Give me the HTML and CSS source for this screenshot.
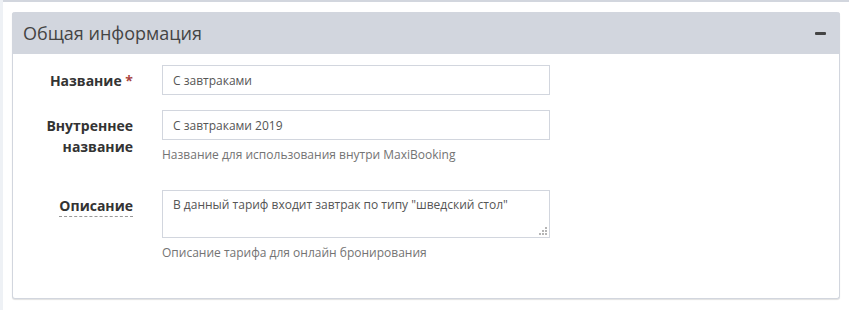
FILE: index.html
```html
<!DOCTYPE html>
<html lang="ru">
<head>
<meta charset="utf-8">
<link rel="stylesheet" href="styles.css">
</head>
<body>
<div class="layout">
  <div class="side-strip"></div>
  <main class="content">
    <section class="box">
      <header class="box-header">
        <h3 class="box-title">Общая информация</h3>
        <button class="box-tool" type="button" aria-label="Свернуть"><span class="minus"></span></button>
      </header>
      <div class="box-body">
        <div class="form-group">
          <label class="control-label" for="f-name">Название <span class="req">*</span></label>
          <div class="field">
            <input id="f-name" class="form-control" type="text" value="С завтраками">
          </div>
        </div>
        <div class="form-group">
          <label class="control-label" for="f-inner">Внутреннее название</label>
          <div class="field">
            <input id="f-inner" class="form-control" type="text" value="С завтраками 2019">
            <p class="help-block">Название для использования внутри MaxiBooking</p>
          </div>
        </div>
        <div class="form-group">
          <label class="control-label" for="f-desc"><span class="dashed">Описание</span></label>
          <div class="field">
            <div class="textarea-wrap">
              <textarea id="f-desc" class="form-control textarea">В данный тариф входит завтрак по типу "шведский стол"</textarea>
              <svg class="grip" width="8" height="8" viewBox="0 0 8 8" aria-hidden="true">
                <rect x="6" y="0" width="2" height="2"/>
                <rect x="3" y="3" width="2" height="2"/><rect x="6" y="3" width="2" height="2"/>
                <rect x="0" y="6" width="2" height="2"/><rect x="3" y="6" width="2" height="2"/><rect x="6" y="6" width="2" height="2"/>
              </svg>
            </div>
            <p class="help-block">Описание тарифа для онлайн бронирования</p>
          </div>
        </div>
      </div>
    </section>
  </main>
</div>
</body>
</html>
```

FILE: styles.css
```css
* { box-sizing: border-box; }
html, body { margin: 0; padding: 0; background: #fff; }
body {
  font-family: "Open Sans", "Liberation Sans", sans-serif;
  color: #333;
  width: 849px;
  height: 310px;
  overflow: hidden;
}
.layout { display: flex; height: 310px; }
.side-strip { width: 3px; background: #eef1f5; flex: none; }
.content {
  flex: 1;
  border-top: 2px solid #d2d6de;
  padding: 10px 9px 0 9px;
}
.box {
  border: 1px solid #d2d6de;
  border-top: 0;
  border-radius: 3px;
  background: #fff;
  box-shadow: 0 1px 1px rgba(0,0,0,0.12);
}
.box-header {
  background: #d2d6de;
  height: 42px;
  border-radius: 3px 3px 0 0;
  margin: 0 -1px;
  display: flex;
  align-items: center;
  justify-content: space-between;
  padding: 0 14px 0 11px;
}
.box-title {
  margin: 0;
  font-size: 18px;
  font-weight: 400;
  color: #444;
  line-height: 1;
}
.box-tool {
  border: 0;
  background: transparent;
  padding: 0;
  width: 12px;
  height: 12px;
  display: flex;
  align-items: center;
  justify-content: center;
}
.minus { display: block; width: 11px; height: 3px; background: #444; border-radius: 1px; }
.box-body { padding: 11px 15px 10px 15px; }
.form-group {
  display: grid;
  grid-template-columns: 105px 388px;
  column-gap: 29px;
  margin-bottom: 15px;
}
.control-label {
  text-align: right;
  font-weight: 700;
  font-size: 14px;
  line-height: 21px;
  padding-top: 5px;
  color: #333;
}
.req { color: #a94442; }
.dashed { border-bottom: 1px dashed #999; padding-bottom: 1px; }
.form-control {
  display: block;
  width: 388px;
  height: 30px;
  border: 1px solid #d2d6de;
  border-radius: 0;
  padding: 5px 10px;
  font-family: "Open Sans", "Liberation Sans", sans-serif;
  font-size: 12px;
  color: #555;
  background: #fff;
  outline: none;
}
.textarea-wrap { position: relative; width: 388px; height: 48px; }
.textarea { height: 48px; resize: none; padding-top: 5px; line-height: 18px; }
.grip { position: absolute; right: 3px; bottom: 3px; fill: #b5b5b5; }
.help-block {
  margin: 5px 0 10px;
  font-size: 12px;
  line-height: 20px;
  color: #737373;
}
```
